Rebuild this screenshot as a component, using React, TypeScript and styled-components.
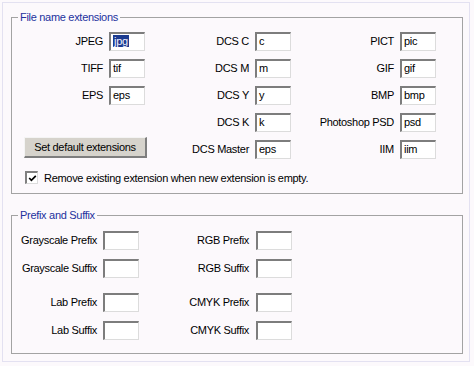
import React from 'react';
import styled, { createGlobalStyle } from 'styled-components';

const Global = createGlobalStyle`
  html, body { margin: 0; padding: 0; background: #fcf9fc; }
  body {
    font-family: "Liberation Sans", Arial, sans-serif;
    font-size: 11px;
    letter-spacing: -0.3px;
    color: #000;
  }
  * { box-sizing: border-box; }
`;

const Frame = styled.div`
  width: 468px;
  margin: 2px;
  border: 1px solid #e3e1f1;
  padding: 8px 6px 7px 8px;
  display: flex;
  flex-direction: column;
  gap: 15px;
`;

const Group = styled.fieldset`
  margin: 0;
  padding: 0;
  min-width: 0;
  border: 1px solid #a3a3a3;
`;

const Legend = styled.legend`
  margin-left: 6px;
  padding: 0 2px;
  line-height: 13px;
  color: #23319e;
`;

const GroupBody = styled.div<{ $top: number; $bottom: number; $gap?: number }>`
  display: flex;
  flex-direction: column;
  gap: ${(p) => p.$gap ?? 0}px;
  padding: ${(p) => p.$top}px 0 ${(p) => p.$bottom}px 0;
`;

const ExtGrid = styled.div`
  display: grid;
  grid-template-columns: 97px 36px 110px 36px 109px 36px;
  grid-template-rows: repeat(5, 19px);
  row-gap: 8px;
`;

const PairGrid = styled.div`
  display: grid;
  grid-template-columns: 91px 36px 117px 36px;
  grid-template-rows: repeat(2, 19px);
  row-gap: 9px;
`;

const Label = styled.div<{ $pad?: number }>`
  text-align: right;
  padding-right: ${(p) => p.$pad ?? 6}px;
  line-height: 19px;
  white-space: nowrap;
`;

const Field = styled.div`
  width: 36px;
  height: 19px;
  background: #fff;
  border-style: solid;
  border-width: 2px 1px 1px 2px;
  border-color: #7d7d7d #dcdcdc #dcdcdc #7d7d7d;
  padding-left: 2px;
  line-height: 15px;
  white-space: nowrap;
  overflow: hidden;
`;

const Selected = styled.span`
  background: #1b3a8f;
  color: #f2f2ff;
  padding: 0 1px;
`;

const Empty = styled.div``;

const DefaultsButton = styled.button`
  grid-column: 1 / 3;
  justify-self: start;
  align-self: start;
  margin: -3px 0 0 12px;
  width: 123px;
  height: 21px;
  padding: 0;
  font: inherit;
  letter-spacing: inherit;
  color: #000;
  background: #d6d3cc;
  border-style: solid;
  border-width: 1px 2px 2px 1px;
  border-color: #f4f4f4 #7e7e7e #7e7e7e #f4f4f4;
`;

const CheckRow = styled.label`
  display: flex;
  align-items: center;
  gap: 6px;
  margin: 12px 0 0 13px;
  height: 13px;
  white-space: nowrap;
`;

const CheckBox = styled.span`
  width: 13px;
  height: 13px;
  flex: none;
  background: #fff;
  border-style: solid;
  border-width: 2px 1px 1px 2px;
  border-color: #808080 #dcdcdc #dcdcdc #808080;
  display: flex;
  align-items: center;
  justify-content: center;
`;

type Ext = [string, string];

const col1: (Ext | null)[] = [['JPEG', 'jpg'], ['TIFF', 'tif'], ['EPS', 'eps'], null, null];
const col2: Ext[] = [['DCS C', 'c'], ['DCS M', 'm'], ['DCS Y', 'y'], ['DCS K', 'k'], ['DCS Master', 'eps']];
const col3: Ext[] = [['PICT', 'pic'], ['GIF', 'gif'], ['BMP', 'bmp'], ['Photoshop PSD', 'psd'], ['IIM', 'iim']];

export default function App() {
  const cells: React.ReactNode[] = [];
  for (let r = 0; r < 5; r++) {
    const a = col1[r];
    if (a) {
      cells.push(<Label key={`a${r}`}>{a[0]}</Label>);
      cells.push(
        <Field key={`af${r}`}>{a[1] === 'jpg' ? <Selected>{a[1]}</Selected> : a[1]}</Field>
      );
    } else if (r === 4) {
      cells.push(<DefaultsButton key="btn">Set default extensions</DefaultsButton>);
    } else {
      cells.push(<Empty key={`e${r}`} />, <Empty key={`ef${r}`} />);
    }
    cells.push(<Label key={`b${r}`}>{col2[r][0]}</Label>);
    cells.push(<Field key={`bf${r}`}>{col2[r][1]}</Field>);
    cells.push(<Label key={`c${r}`}>{col3[r][0]}</Label>);
    cells.push(<Field key={`cf${r}`}>{col3[r][1]}</Field>);
  }

  const pairs = (rows: [string, string][]) =>
    rows.flatMap(([l, r]) => [
      <Label key={l}>{l}</Label>,
      <Field key={l + 'f'} />,
      <Label key={r} $pad={7}>{r}</Label>,
      <Field key={r + 'f'} />,
    ]);

  return (
    <>
      <Global />
      <Frame>
        <Group>
          <Legend>File name extensions</Legend>
          <GroupBody $top={8} $bottom={9}>
            <ExtGrid>{cells}</ExtGrid>
            <CheckRow>
              <CheckBox>
                <svg width="9" height="9" viewBox="0 0 9 9">
                  <polyline points="1.2,4 3.4,6.3 7.8,1.8" fill="none" stroke="#000" strokeWidth="1.7" />
                </svg>
              </CheckBox>
              Remove existing extension when new extension is empty.
            </CheckRow>
          </GroupBody>
        </Group>
        <Group>
          <Legend>Prefix and Suffix</Legend>
          <GroupBody $top={9} $bottom={13} $gap={15}>
            <PairGrid>
              {pairs([
                ['Grayscale Prefix', 'RGB Prefix'],
                ['Grayscale Suffix', 'RGB Suffix'],
              ])}
            </PairGrid>
            <PairGrid>
              {pairs([
                ['Lab Prefix', 'CMYK Prefix'],
                ['Lab Suffix', 'CMYK Suffix'],
              ])}
            </PairGrid>
          </GroupBody>
        </Group>
      </Frame>
    </>
  );
}
